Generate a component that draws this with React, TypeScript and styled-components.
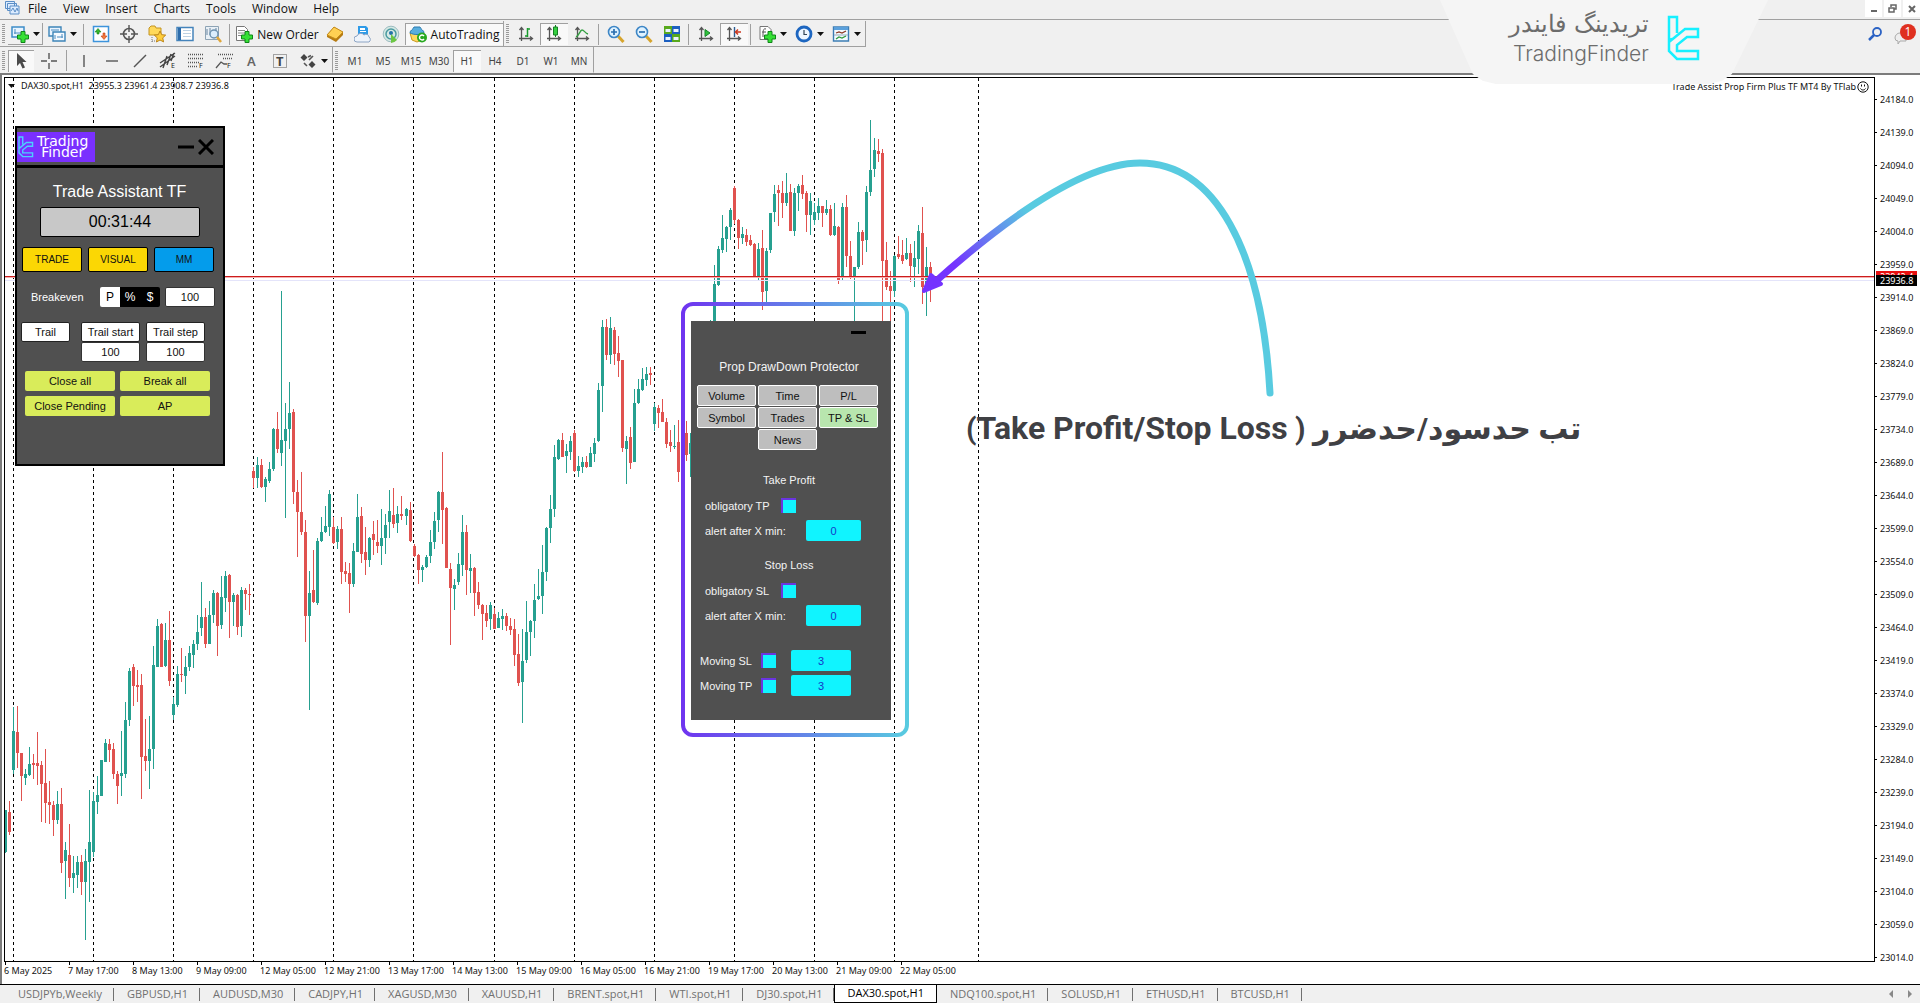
import React from 'react';
import styled, { createGlobalStyle, css } from 'styled-components';

const GlobalStyle = createGlobalStyle`
  *, *::before, *::after { box-sizing: border-box; }
  body { margin: 0; background: #fff; }
  button, input { font: inherit; color: inherit; margin: 0; padding: 0; border: 0; background: none; }
  svg { display: block; flex: none; }
`;

const UI_FONT = '"Open Sans", "Noto Sans", sans-serif';
const CHART_FONT = '"Noto Sans", "Open Sans", sans-serif';
const PANEL_FONT = '"Liberation Sans", Arial, sans-serif';

/* ---------- window chrome ---------- */

const Window = styled.div`
  position: relative;
  display: flex;
  flex-direction: column;
  min-height: 100vh;
  overflow: hidden;
  background: #f0f0f0;
  color: #111;
  font-family: ${UI_FONT};
  font-size: 12px;
`;

const MenuBar = styled.nav`
  display: flex;
  align-items: flex-start;
  height: 20px;
  padding-left: 5px;
  border-bottom: 1px solid #a0a0a0;
`;

const MenuItem = styled.button`
  padding: 0 8px;
  line-height: 17px;
`;

const WindowControls = styled.div`
  display: flex;
  gap: 2px;
  margin-left: auto;
`;

const ControlButton = styled.button`
  display: grid;
  place-items: center;
  width: 17px;
  height: 17px;
  background: #fff;
`;

const ToolRow = styled.div<{ $height: number }>`
  display: flex;
  align-items: center;
  height: ${(p) => p.$height}px;
`;

const ToolGroup = styled.div<{ $line?: boolean }>`
  display: flex;
  align-items: center;
  height: 26px;
  padding-top: 2px;
  border-right: 1px solid #a0a0a0;
  border-bottom: 1px solid ${(p) => (p.$line ? '#a0a0a0' : 'transparent')};
`;

const Grip = styled.span`
  width: 3px;
  height: 20px;
  margin: 0 3px 0 2px;
  background: repeating-linear-gradient(#9a9a9a 0 1px, transparent 1px 2px);
`;

const Separator = styled.span`
  width: 1px;
  height: 21px;
  margin: 0 3px 0 2px;
  background: #a0a0a0;
`;

const Tool = styled.button<{ $width?: number; $pressed?: boolean; $raised?: boolean }>`
  display: flex;
  align-items: center;
  justify-content: center;
  gap: 4px;
  width: ${(p) => p.$width ?? 28}px;
  height: 22px;
  white-space: nowrap;
  ${(p) => p.$pressed && css`
    background: #f9f9f9;
    box-shadow: inset 1px 1px 0 #a0a0a0;
  `}
  ${(p) => p.$raised && css`
    box-shadow: inset -1px -1px 0 #a0a0a0;
  `}
`;

const Period = styled(Tool)`
  color: #444;
  font-family: ${CHART_FONT};
  font-size: 10px;
`;

const Alerts = styled.div`
  display: flex;
  align-items: center;
  gap: 11px;
  margin-left: auto;
  padding-right: 1px;
`;

/* ---------- chart ---------- */

const ChartWindow = styled.main`
  display: grid;
  flex: 1;
  grid-template-columns: minmax(0, 1fr) 45px;
  grid-template-rows: minmax(0, 1fr) 22px;
  padding: 2px 0 0 2px;
  border-top: 2px solid #7c7c7c;
  border-left: 2px solid #7c7c7c;
  background: #fff;
  font-family: ${CHART_FONT};
  font-size: 9px;
  line-height: 12px;
`;

const Plot = styled.section`
  position: relative;
  overflow: hidden;
  border: 1px solid #000;
`;

const PlotDrawing = styled.svg`
  position: absolute;
  inset: 0;
  width: 100%;
  height: 100%;
`;

const ChartCaption = styled.div`
  position: absolute;
  top: 2px;
  left: 3px;
  display: flex;
  align-items: center;
  gap: 6px;
  white-space: pre;
`;

const ExpertName = styled.div`
  position: absolute;
  top: 3px;
  right: 5px;
  display: flex;
  align-items: center;
  gap: 1px;
`;

const Annotation = styled.p`
  position: absolute;
  top: 325px;
  left: 961px;
  margin: 0;
  color: #3f4044;
  font: 700 30px/50px Roboto, "DejaVu Sans", sans-serif;
  white-space: nowrap;
`;

const Latin = styled.bdi`
  font-size: 32px;
`;

const PriceAxis = styled.aside`
  position: relative;
  grid-row: 1 / 3;
  grid-column: 2;
  padding-top: 6px;
`;

const PriceLabel = styled.div`
  display: flex;
  align-items: center;
  gap: 3px;
  height: 33px;
  &::before { content: ''; width: 2px; height: 1px; background: #000; }
`;

const PriceTag = styled.div<{ $color: string; $top: number }>`
  position: absolute;
  top: ${(p) => p.$top}px;
  left: 1px;
  width: 41px;
  height: 11px;
  padding-left: 4px;
  background: ${(p) => p.$color};
  color: #fff;
  line-height: 11px;
`;

const DateAxis = styled.footer`
  display: flex;
  grid-column: 1;
`;

const DateLabel = styled.div`
  width: 64px;
  white-space: nowrap;
  &::before { content: ''; display: block; width: 1px; height: 3px; margin-left: 1px; background: #000; }
`;

const TabBar = styled.div`
  display: flex;
  align-items: center;
  height: 19px;
  padding-left: 5px;
  border-top: 1px solid #000;
  color: #707070;
  font-size: 11px;
`;

const Tab = styled.button<{ $active?: boolean }>`
  height: 18px;
  padding: 0 12px 0 13px;
  line-height: 16px;
  white-space: nowrap;
  background: linear-gradient(#707070, #707070) right center / 1px 13px no-repeat;
  ${(p) => p.$active && css`
    margin-top: -1px;
    padding: 0 12px;
    background: #fff;
    border: solid #000;
    border-width: 0 1px 1px;
    color: #000;
  `}
`;

const TabScroll = styled.div`
  display: flex;
  gap: 15px;
  margin-left: auto;
  padding-right: 8px;
`;

/* ---------- assistant panel ---------- */

const Assistant = styled.section`
  position: absolute;
  top: 48px;
  left: 10px;
  width: 210px;
  height: 340px;
  border: 2px solid #000;
  background: #505050;
  color: #fff;
  font-family: ${PANEL_FONT};
  font-size: 11px;
`;

const AssistantHeader = styled.header`
  display: flex;
  align-items: center;
  gap: 4px;
  height: 40px;
  padding-right: 9px;
  border-bottom: 3px solid #000;
`;

const Badge = styled.div`
  display: flex;
  align-items: center;
  gap: 2px;
  width: 78px;
  height: 30px;
  margin-right: auto;
  background: #7a30ff;
  font: 400 14px/11px "DejaVu Sans", sans-serif;
`;

const BadgeName = styled.span`
  white-space: pre-line;
  text-align: center;
`;

const AssistantBody = styled.div`
  display: flex;
  flex-direction: column;
  padding: 13px 5px 0 4px;
`;

const AssistantTitle = styled.h2`
  margin: 0;
  font-size: 16px;
  font-weight: 400;
  line-height: 22px;
  text-align: center;
`;

const Clock = styled.output`
  width: 160px;
  height: 30px;
  margin: 4px 0 10px 19px;
  border: 1px solid #000;
  border-radius: 2px;
  background: #c8c8c8;
  color: #000;
  font-size: 16px;
  line-height: 28px;
  text-align: center;
`;

const Row = styled.div<{ $gap: number; $bottom: number; $left?: number }>`
  display: flex;
  align-items: flex-start;
  gap: ${(p) => p.$gap}px;
  margin-bottom: ${(p) => p.$bottom}px;
  padding-left: ${(p) => p.$left ?? 0}px;
`;

const ModeButton = styled.button<{ $color: string }>`
  width: 60px;
  height: 25px;
  border: 1px solid #000;
  border-radius: 2px;
  background: ${(p) => p.$color};
  color: #111;
  font-size: 10px;
`;

const BreakevenLabel = styled.label`
  width: 69px;
  line-height: 20px;
`;

const UnitGroup = styled.div`
  display: flex;
  overflow: hidden;
  border-radius: 2px;
`;

const Unit = styled.button<{ $on?: boolean }>`
  width: 20px;
  height: 20px;
  background: ${(p) => (p.$on ? '#fff' : '#000')};
  color: ${(p) => (p.$on ? '#000' : '#fff')};
  font-size: 12px;
`;

const WhiteInput = styled.input<{ $width: number }>`
  width: ${(p) => p.$width}px;
  height: 20px;
  border: 1px solid #333;
  border-radius: 2px;
  background: #fff;
  color: #111;
  text-align: center;
`;

const WhiteButton = styled.button<{ $width: number }>`
  width: ${(p) => p.$width}px;
  height: 20px;
  border: 1px solid #222;
  border-radius: 2px;
  background: #fff;
  color: #111;
`;

const Stack = styled.div`
  display: flex;
  flex-direction: column;
`;

const ActionGrid = styled.div`
  display: grid;
  grid-template-columns: 90px 90px;
  gap: 5px;
  padding-left: 4px;
`;

const ActionButton = styled.button`
  height: 20px;
  border-radius: 2px;
  background: #d9ec5a;
  color: #111;
`;

/* ---------- drawdown panel ---------- */

const Protector = styled.section`
  position: absolute;
  top: 243px;
  left: 686px;
  width: 200px;
  height: 399px;
  padding: 0 12px 0 6px;
  background: #505050;
  color: #f4f4f4;
  font-family: ${PANEL_FONT};
  font-size: 11px;
`;

const MinimizeRow = styled.div`
  display: flex;
  justify-content: flex-end;
  height: 36px;
  padding: 10px 13px 0 0;
`;

const Minimize = styled.button`
  width: 15px;
  height: 3px;
  background: #000;
`;

const ProtectorTitle = styled.h2`
  margin: 0 0 8px;
  padding-left: 2px;
  font-size: 12px;
  font-weight: 400;
  line-height: 20px;
  text-align: center;
`;

const TabGrid = styled.div`
  display: grid;
  grid-template-columns: repeat(3, 59px);
  gap: 1px 2px;
`;

const PanelTab = styled.button<{ $active?: boolean; $middle?: boolean }>`
  height: 21px;
  border: 1px solid #fff;
  border-radius: 2px;
  background: ${(p) => (p.$active ? '#b8e6ae' : '#bebebe')};
  color: #111;
  ${(p) => p.$middle && css`grid-column: 2;`}
`;

const SectionTitle = styled.h3<{ $top: number }>`
  margin: ${(p) => p.$top}px 0 3px;
  padding-left: 2px;
  font-size: 11px;
  font-weight: 400;
  line-height: 20px;
  text-align: center;
`;

const Field = styled.div<{ $columns: string; $left: number }>`
  display: grid;
  grid-template-columns: ${(p) => p.$columns};
  align-items: center;
  height: 25px;
  padding-left: ${(p) => p.$left}px;
  white-space: nowrap;
`;

const Check = styled.input`
  appearance: none;
  width: 15px;
  height: 15px;
  border: solid #6a35e0;
  border-width: 2px 0 0 2px;
  background: #10f4ff;
`;

const CyanInput = styled.input<{ $width: number }>`
  width: ${(p) => p.$width}px;
  height: 21px;
  border-radius: 2px;
  background: #10f4ff;
  color: #1538c8;
  text-align: center;
`;

const MovingFields = styled.div`
  margin-top: 20px;
`;

/* ---------- watermark ---------- */

const Watermark = styled.div`
  position: absolute;
  top: 0;
  right: 152px;
  display: flex;
  justify-content: center;
  gap: 18px;
  width: 328px;
  height: 84px;
  padding: 9px 0 0 2px;
  background: #f5f5f5;
  clip-path: polygon(0 0, 100% 0, 89% 88%, 86% 96%, 82% 100%, 17% 100%, 13% 96%, 10% 88%);
  color: #6c6c6c;
`;

const BrandName = styled.div`
  display: flex;
  flex-direction: column;
  align-items: flex-end;
  font: 300 21px/30px Inter, "DejaVu Sans", sans-serif;
`;

const BrandPersian = styled.span`
  font: 200 24px/30px "DejaVu Sans", sans-serif;
`;

/* ---------- drawings ---------- */

const Caret = () => (
  <svg width="7" height="4"><path d="M0 0h7L3.500 4z" fill="#111" /></svg>
);

const Icon = ({ children, size = 18 }: { children: React.ReactNode; size?: number }) => (
  <svg width={size} height={size} viewBox="0 0 18 18" fill="none">{children}</svg>
);

const Plus = () => (
  <path d="M10 6.500h4v3.500h3.500v4H14v3.500h-4V14H6.500v-4H10z" fill="#35e035" stroke="#11851a" />
);

const Axes = () => (
  <path d="M4.500 3v13M2 13.500h13M2.500 5l2-2.500 2 2.500M13 11.500l2.500 2-2.500 2" stroke="#555" strokeWidth="1.300" />
);

const AppIcon = () => (
  <svg width="15" height="15" viewBox="0 0 15 15" fill="#dcecff" stroke="#5b8ec6">
    <path d="M.5 1.500h9v7h-9zM2.500 3.500h9v7h-9z" /><path d="M5 6h9v8H5z" /><path d="M6 11l2-3 2 4 2-4 1 3" fill="none" />
  </svg>
);

const NewChartIcon = () => (
  <Icon><path d="M1 2h12v10H1z" fill="#e8f4ff" stroke="#3c8cc8" strokeWidth="1.500" /><path d="M3 8h7M4 4v5" stroke="#4a8cc0" /><Plus /></Icon>
);
const ProfilesIcon = () => (
  <Icon><path d="M1 2h12v9H1z" fill="#eaf4ff" stroke="#3c84b8" strokeWidth="1.400" /><path d="M5 7h12v9H5z" fill="#f6faff" stroke="#3c84b8" strokeWidth="1.400" /><path d="M3 5h8M7 10v4M9 12h6M14 9v4" stroke="#4a8cc0" /></Icon>
);
const MarketIcon = () => (
  <Icon><path d="M1.500 1.500h15v15h-15z" fill="#fff" stroke="#3d94dc" strokeWidth="1.500" /><path d="M6 3.500L9 7H7v2H5V7H3z" fill="#35b52c" stroke="#19801c" strokeWidth=".6" /><path d="M12 14.500L9 11h2V8h2v3h2z" fill="#f27a3d" stroke="#c33c14" strokeWidth=".6" /></Icon>
);
const CrosshairIcon = () => (
  <Icon><circle cx="9" cy="9" r="5.500" stroke="#555" strokeWidth="1.600" /><path d="M9 0v7M9 11v7M0 9h7M11 9h7" stroke="#555" strokeWidth="1.400" /></Icon>
);
const FavoritesIcon = () => (
  <Icon><path d="M1 3l2-2h4l1 2h5v7H1z" fill="#ffd95a" stroke="#c39422" /><path d="M4 12v5M4 16h4" stroke="#777" strokeDasharray="1 1" /><path d="M12 6l1.700 3.700 4 .4-3 2.800.9 4L12 15l-3.600 2 .9-4.100-3-2.800 4-.4z" fill="#ffce3a" stroke="#bd861a" /></Icon>
);
const NavigatorIcon = () => (
  <Icon><path d="M1 2.500h16v13H1z" fill="#fff" stroke="#4584bb" strokeWidth="1.500" /><path d="M2 3h3v12H2z" fill="#2c6cab" /><path d="M7 5.500h8M7 8.500h8M7 11.500h8" stroke="#bdd2e4" /></Icon>
);
const TesterIcon = () => (
  <Icon><path d="M1.500 1.500h13v13h-13z" fill="#e9f0f6" stroke="#8da3b4" /><path d="M3 4v6M6 3v7M12 3v4" stroke="#6684a0" /><circle cx="10" cy="9" r="4" fill="#d7edff" fillOpacity=".8" stroke="#6d92b0" strokeWidth="1.400" /><path d="M13 12l4 5" stroke="#dfa63a" strokeWidth="2.500" /></Icon>
);
const OrderIcon = () => (
  <Icon><path d="M1.500 1.500h8l3 3v11h-11z" fill="#fff" stroke="#777" /><path d="M3 5.500h7M3 8h7M3 10.500h5" stroke="#888" /><Plus /></Icon>
);
const MetaEditorIcon = () => (
  <Icon><path d="M1 10l7-8 9 5v3l-7 7-9-5z" fill="#b77c12" /><path d="M1 10l7-8 9 5-7 7z" fill="#ffd053" stroke="#c48b1a" /></Icon>
);
const CloudIcon = () => (
  <Icon><path d="M4 1h8l2 2v7H4z" fill="#2e9be8" /><path d="M6 3h5v2H6zM6 6h6v1H6z" fill="#fff" /><path d="M3 17a3 3 0 010-6 4 4 0 017-1 3 3 0 015 2 3 3 0 010 5z" fill="#eef3fa" stroke="#8ca4c4" /></Icon>
);
const SignalIcon = () => (
  <Icon><circle cx="9" cy="9" r="7.800" fill="#d6e9e4" stroke="#9bbcc0" /><circle cx="9" cy="9" r="5" stroke="#4a9aa0" strokeWidth="1.500" /><circle cx="9" cy="8" r="2" fill="#2272a8" /><path d="M9 9v9a9 9 0 006-3z" fill="#6cc644" /></Icon>
);
const RobotIcon = () => (
  <Icon><path d="M1 8h14l-2 7-5 2-5-2z" fill="#ffd95e" stroke="#c99820" /><path d="M1 8c0-3 3-3 4-6h6c1 3 4 3 4 6-4 2-10 2-14 0z" fill="#58aede" stroke="#2b7bb0" /><circle cx="13" cy="12.500" r="5" fill="#27a81f" /><path d="M15 11a2.500 2.500 0 100 3" stroke="#fff" strokeWidth="1.400" /></Icon>
);
const BarsIcon = () => <Icon><Axes /><path d="M10.500 3v9M8 11h2.500M10.500 4H13" stroke="#189a2c" strokeWidth="1.500" /></Icon>;
const CandlesIcon = () => <Icon><Axes /><path d="M10.500 0v12" stroke="#167f25" /><path d="M8.500 2h4v8h-4z" fill="#35d040" stroke="#167f25" /></Icon>;
const LineIcon = () => <Icon><Axes /><path d="M3 12c3-1 4-7 6-7s3 3 6 4" stroke="#35a043" strokeWidth="1.400" /></Icon>;
const ZoomIcon = ({ plus }: { plus?: boolean }) => (
  <Icon><path d="M11 11l5.500 6" stroke="#d6a42c" strokeWidth="3" /><circle cx="7" cy="7" r="5.500" fill="#dff2ff" stroke="#3d86c6" strokeWidth="1.600" /><path d={plus ? 'M4 7h6M7 4v6' : 'M4 7h6'} stroke="#2b6fb0" strokeWidth="1.700" /></Icon>
);
const TilesIcon = () => (
  <Icon><path d="M1 1h8v8H1zM9 9h8v8H9z" fill="#58a91c" /><path d="M9 1h8v8H9zM1 9h8v8H1z" fill="#1c5fc0" /><path d="M2.500 4h5v3h-5zM10.500 4h5v3h-5zM2.500 12h5v3h-5zM10.500 12h5v3h-5z" fill="#eaf3ff" /></Icon>
);
const ScrollIcon = () => <Icon><Axes /><path d="M8 4.500l5 3.500-5 3.500z" fill="#2fc23b" stroke="#18852a" /></Icon>;
const ShiftIcon = () => <Icon><Axes /><path d="M9.500 2v10" stroke="#2c5d92" strokeWidth="1.400" /><path d="M16 7h-5M13 4.500L10.500 7l2.500 2.500" stroke="#cc3a20" strokeWidth="1.500" /></Icon>;
const IndicatorIcon = () => (
  <Icon><path d="M2 1.500h8l3 3v10H2z" fill="#fff" stroke="#777" /><path d="M8 4c-3-1-3 2-3 8M4 7h4" stroke="#555" /><Plus /></Icon>
);
const ClockIcon = () => (
  <Icon><circle cx="9" cy="9" r="7" fill="#eef6ff" stroke="#1d66c0" strokeWidth="2.800" /><path d="M9 5v4.500h3" stroke="#345" strokeWidth="1.200" /></Icon>
);
const TemplateIcon = () => (
  <Icon><path d="M1.500 2h15v14h-15z" fill="#f4faff" stroke="#3d7db4" strokeWidth="1.400" /><path d="M2 2h14v3H2z" fill="#5aa0dc" /><path d="M4 8l3-1 3 1 4-2" stroke="#8c3a24" strokeWidth="1.300" /><path d="M2 10h14" stroke="#9ab" /><path d="M4 14l3-2 3 1 4-2" stroke="#2e9a3a" strokeWidth="1.300" /></Icon>
);
const Mark = ({ children }: { children: string }) => (
  <text x="12" y="16" fontSize="7" fontFamily="Noto Sans" fill="#222">{children}</text>
);
const StrokeIcon = ({ d }: { d: string }) => (
  <Icon><path d={d} stroke="#555" strokeWidth="1.400" /></Icon>
);
const ChannelIcon = () => (
  <Icon><path d="M1 15L16 4M1 11L16 1M4 16L8 4M8 13L12 2M12 9L15 1" stroke="#444" strokeWidth="1.400" /><Mark>E</Mark></Icon>
);
const CursorIcon = () => <Icon><path d="M5 1v13l3-3 2.500 5.500 2.500-1L10.500 10h4z" fill="#4b4b4b" /></Icon>;
const TextIcon = () => <Icon><text x="4" y="14" fontSize="13" fontWeight="600" fontFamily="Noto Sans" fill="#666">A</text></Icon>;
const LabelIcon = () => (
  <Icon><path d="M2.500 2.500h13v13h-13z" stroke="#555" strokeDasharray="1 1" /><text x="5" y="14" fontSize="13" fontWeight="700" fontFamily="Noto Sans" fill="#444">T</text></Icon>
);
const FiboIcon = ({ fan }: { fan?: boolean }) => (
  <Icon>
    <path d={fan ? 'M3 2.500h15M8 6.500h9' : 'M1 2.500h15M1 6.500h15M1 10.500h11M1 14.500h9'} stroke="#555" strokeDasharray="1 1" strokeWidth="1.400" />
    {fan && <path d="M1 16l5-6 3 2h3" stroke="#555" strokeWidth="1.300" />}
    <Mark>F</Mark>
  </Icon>
);
const ShapesIcon = () => (
  <Icon><path d="M5 2l3.500 3.500L5 9 1.500 5.500zM13 9l3.500 3.500L13 16l-3.500-3.500z" fill="#444" /><path d="M9 5l3-1.500M5 11l3 3M10 8l4-4" stroke="#555" strokeWidth="1.600" /></Icon>
);

const BRAND_MARK = 'M10 18V2H2V25L5 24M2 27L18 14H31V22H20L10 30V36H31V44H10L2 36Z';

/* ---------- market data: [up, high, bodyTop, bodyBottom, low] in page pixels ---------- */

type Candle = [0 | 1, number, number, number, number];

const CANDLES: Candle[] = [
  [1,810,810,852,853],[0,801,812,832,835],[1,707,731,770,774],[0,706,732,753,768],[0,753,753,776,801],[1,769,774,778,785],
  [1,747,764,775,776],[0,754,763,765,779],[0,732,763,766,785],[0,761,765,784,822],[0,749,783,803,823],[0,781,802,805,824],
  [0,801,805,820,836],[1,791,804,820,824],[0,788,804,863,873],[1,842,850,861,899],[0,824,855,878,887],[1,856,873,878,893],
  [1,856,862,875,888],[0,855,862,882,895],[1,849,861,882,940],[1,790,842,862,902],[1,792,801,852,857],[1,776,795,802,814],
  [1,760,760,796,796],[1,739,743,762,762],[0,739,744,750,762],[0,743,749,774,779],[0,771,774,786,804],[1,731,773,776,796],
  [1,702,720,774,778],[1,668,671,720,726],[0,664,667,686,706],[0,670,685,687,702],[0,674,685,757,799],[0,719,756,761,771],
  [1,716,749,761,789],[1,646,665,749,769],[1,619,626,667,667],[0,623,624,667,667],[1,623,640,666,667],[0,611,640,681,686],
  [1,697,704,715,720],[1,666,674,705,707],[0,648,674,675,682],[1,656,667,676,694],[1,646,653,667,671],[1,640,644,655,668],
  [1,615,632,644,650],[1,582,617,628,636],[0,608,617,644,648],[1,601,615,644,644],[1,590,593,615,623],[0,592,593,626,656],
  [1,576,597,625,629],[1,571,576,598,612],[0,574,575,602,638],[1,593,595,602,626],[0,594,595,627,635],[1,587,590,626,637],
  [0,588,590,594,610],[0,584,594,595,615],
  [0,467,471,478,488],[1,457,465,478,488],[0,459,465,487,488],[1,477,479,487,502],[1,462,469,481,483],[1,428,429,469,471],
  [0,412,429,449,453],[1,291,440,453,466],[1,403,429,441,518],[1,382,413,429,449],[0,409,412,492,504],[0,480,492,512,557],
  [0,472,512,532,535],[0,520,532,616,642],[1,571,593,616,710],[0,550,590,602,603],[1,538,541,603,605],[1,517,532,541,542],
  [1,506,526,532,533],[1,490,494,527,536],[0,517,527,543,544],[1,526,529,542,549],[0,517,529,572,584],[0,562,571,574,582],
  [0,563,573,584,613],[1,543,551,584,587],[1,494,517,552,552],[0,507,516,554,563],[0,527,552,560,575],[1,537,538,560,567],
  [0,521,534,540,555],[0,520,542,546,553],[1,509,538,546,565],[1,514,525,538,554],[1,490,511,522,538],[0,488,515,524,528],
  [1,506,514,523,533],[0,496,514,516,520],[1,508,509,516,525],[0,502,510,541,542],[0,544,546,556,557],[0,554,555,570,584],
  [1,565,567,570,582],[1,555,557,567,568],[1,530,542,556,563],[1,512,521,542,549],[1,491,492,520,532],[0,452,492,510,544],
  [0,507,508,568,568],[0,563,569,588,645],[1,579,585,589,610],[1,553,564,582,585],[1,515,532,565,576],[0,525,532,570,595],
  [1,554,568,571,593],[0,567,568,593,616],[0,582,592,605,609],[0,604,605,614,640],[0,605,613,621,627],[1,602,605,619,630],
  [0,608,614,629,629],[1,612,618,628,628],[1,609,616,619,630],[0,613,616,626,631],[0,618,626,630,635],[0,619,629,655,666],
  [0,634,654,683,686],[1,629,661,682,723],[1,601,632,660,663],[1,620,621,632,656],[1,584,600,621,638],[1,569,596,599,600],
  [1,545,572,596,614],[1,527,528,572,581],[1,495,509,528,543],[1,445,457,509,517],[1,439,440,459,460],[0,433,440,457,457],
  [1,444,451,456,473],[1,436,441,452,460],[0,430,433,471,472],[1,456,466,471,477],[1,457,462,467,473],[0,456,462,467,468],
  [1,447,453,467,467],[1,438,443,454,462],[1,383,390,441,442],[1,320,327,386,412],[0,319,327,355,360],[1,317,328,355,364],
  [0,327,330,354,365],[0,336,353,361,377],[0,360,360,448,452],[1,436,441,449,484],[0,427,437,463,469],[1,389,403,462,462],
  [1,379,389,403,404],[1,368,379,390,391],[1,367,374,380,386],[0,367,373,375,385],[1,403,407,424,431],[0,405,408,413,428],
  [0,399,412,422,422],[0,418,422,444,448],[0,430,442,446,452],[1,425,446,447,449],[0,420,442,472,482],[1,435,448,470,478],
  [0,421,433,455,461],[1,433,443,454,477],[1,400,420,440,450],[1,380,400,420,430],[1,360,380,400,410],[1,340,360,380,390],
  [1,320,340,360,370],[1,265,284,330,340],[1,246,249,285,286],[1,215,238,250,253],[1,226,227,239,252],[1,208,210,227,240],
  [0,186,188,220,224],[0,219,220,238,249],[1,227,234,238,244],[0,229,235,242,246],[0,235,240,245,246],[0,243,244,276,277],
  [1,243,249,277,280],[0,230,248,292,310],[1,248,251,291,302],[1,213,213,250,253],[1,185,194,212,222],[0,185,190,193,226],
  [0,181,193,203,218],[1,173,193,203,206],[0,184,192,231,231],[1,188,193,231,236],[1,184,186,193,211],[0,175,185,194,199],
  [0,191,193,215,232],[1,193,201,215,235],[1,203,212,220,225],[1,198,206,213,220],[0,206,206,213,227],[1,200,209,213,215],
  [0,205,209,235,236],[1,203,226,235,236],[0,226,227,281,284],[1,203,207,277,280],[0,195,207,256,267],[0,241,256,278,279],
  [1,267,267,277,321],[1,222,232,267,269],[0,230,232,241,265],[1,186,192,240,252],[1,120,170,192,196],[1,138,150,169,177],
  [0,139,151,154,162],[0,149,153,261,321],[0,242,260,287,290],[0,271,286,291,321],[1,255,256,291,297],[0,236,254,257,259],
  [0,240,255,261,264],[1,238,253,259,260],[0,244,253,266,282],[1,241,258,267,287],[1,225,231,259,274],[0,207,233,287,304],
  [1,247,267,287,316],[0,262,267,280,302],
];

const DAY_LINES = [13, 93, 173, 253, 333, 413, 494, 574, 654, 734, 814, 894, 978];
const PRICES = Array.from({ length: 27 }, (_, i) => (24184 - i * 45).toFixed(1));
const DATES = [
  '6 May 2025', '7 May 17:00', '8 May 13:00', '9 May 09:00', '12 May 05:00', '12 May 21:00', '13 May 17:00', '14 May 13:00',
  '15 May 09:00', '16 May 05:00', '16 May 21:00', '19 May 17:00', '20 May 13:00', '21 May 09:00', '22 May 05:00',
];
const SYMBOLS = [
  'USDJPYb,Weekly', 'GBPUSD,H1', 'AUDUSD,M30', 'CADJPY,H1', 'XAGUSD,M30', 'XAUUSD,H1', 'BRENT.spot,H1', 'WTI.spot,H1',
  'DJ30.spot,H1', 'DAX30.spot,H1', 'NDQ100.spot,H1', 'SOLUSD,H1', 'ETHUSD,H1', 'BTCUSD,H1',
];
const MENUS = ['File', 'View', 'Insert', 'Charts', 'Tools', 'Window', 'Help'];
const PERIODS = ['M1', 'M5', 'M15', 'M30', 'H1', 'H4', 'D1', 'W1', 'MN'];
const PANEL_TABS = ['Volume', 'Time', 'P/L', 'Symbol', 'Trades', 'TP & SL', 'News'];

const ChartDrawing = () => (
  <PlotDrawing role="img" aria-label="DAX30 hourly candles">
    <defs>
      <linearGradient id="frame"><stop offset="0" stopColor="#6f35f0" /><stop offset="1" stopColor="#58cbe0" /></linearGradient>
      <linearGradient id="arrow" gradientUnits="userSpaceOnUse" x1="955" y1="265" x2="1025" y2="205">
        <stop offset="0" stopColor="#7433ff" /><stop offset="1" stopColor="#58cbe0" />
      </linearGradient>
    </defs>
    <g transform="translate(-5 -78)">
      <g stroke="#000" strokeDasharray="3 3" shapeRendering="crispEdges">
        {DAY_LINES.map((x) => <line key={x} x1={x + 0.5} x2={x + 0.5} y1="78" y2="961" />)}
      </g>
      <g shapeRendering="crispEdges">
        {CANDLES.map(([up, high, top, bottom, low], i) => {
          const x = Math.round(5 + i * 4.005);
          return (
            <g key={i} fill={up ? '#26a090' : '#e0524f'}>
              <rect x={x} y={high} width="1" height={Math.max(1, low - high)} />
              <rect x={x - 1} y={top} width="3" height={Math.max(1, bottom - top)} />
            </g>
          );
        })}
      </g>
      <rect x="5" y="276" width="100%" height="1" fill="#cc1c1c" />
      <rect x="5" y="277" width="100%" height="1" fill="#f5b0b0" />
      <rect x="5" y="280" width="100%" height="1" fill="#e4e4fa" />
      <rect x="683" y="304" width="224" height="431" rx="10" fill="none" stroke="url(#frame)" strokeWidth="4" />
      <path d="M1270 393C1262 250 1215 163 1140 163C1085 163 1010 215 935 282" fill="none" stroke="url(#arrow)" strokeWidth="7" strokeLinecap="round" />
      <path d="M924 291l7-16 10 9z" fill="#7433ff" stroke="#7433ff" strokeWidth="4" strokeLinejoin="round" />
    </g>
  </PlotDrawing>
);

const AssistantPanel = () => (
  <Assistant>
    <AssistantHeader>
      <Badge>
        <svg width="18" height="22" viewBox="0 0 34 47" fill="none" stroke="#4cd0ff" strokeWidth="3"><path d={BRAND_MARK} /></svg>
        <BadgeName>{'Trading\nFinder'}</BadgeName>
      </Badge>
      <button aria-label="Collapse"><svg width="16" height="16"><path d="M0 8h16" stroke="#000" strokeWidth="3" /></svg></button>
      <button aria-label="Close"><svg width="16" height="16"><path d="M1 1l14 14M15 1L1 15" stroke="#000" strokeWidth="3" /></svg></button>
    </AssistantHeader>
    <AssistantBody>
      <AssistantTitle>Trade Assistant TF</AssistantTitle>
      <Clock>00:31:44</Clock>
      <Row $gap={6} $bottom={15} $left={1}>
        <ModeButton $color="#fbd704">TRADE</ModeButton>
        <ModeButton $color="#fbd704">VISUAL</ModeButton>
        <ModeButton $color="#049ceb">MM</ModeButton>
      </Row>
      <Row $gap={0} $bottom={15} $left={10}>
        <BreakevenLabel htmlFor="breakeven">Breakeven</BreakevenLabel>
        <Row $gap={5} $bottom={0}>
          <UnitGroup><Unit $on>P</Unit><Unit>%</Unit><Unit>$</Unit></UnitGroup>
          <WhiteInput id="breakeven" $width={50} defaultValue="100" />
        </Row>
      </Row>
      <Row $gap={6} $bottom={9}>
        <Row $gap={11} $bottom={0}>
          <WhiteButton $width={49}>Trail</WhiteButton>
          <Stack><WhiteButton $width={59}>Trail start</WhiteButton><WhiteInput aria-label="Trail start" $width={59} defaultValue="100" /></Stack>
        </Row>
        <Stack><WhiteButton $width={59}>Trail step</WhiteButton><WhiteInput aria-label="Trail step" $width={59} defaultValue="100" /></Stack>
      </Row>
      <ActionGrid>
        {['Close all', 'Break all', 'Close Pending', 'AP'].map((t) => <ActionButton key={t}>{t}</ActionButton>)}
      </ActionGrid>
    </AssistantBody>
  </Assistant>
);

const LevelSection = ({ title, code, top }: { title: string; code: string; top: number }) => (
  <>
    <SectionTitle $top={top}>{title}</SectionTitle>
    <Field $left={8} $columns="76px auto">
      <label htmlFor={`need-${code}`}>obligatory {code}</label>
      <Check type="checkbox" id={`need-${code}`} />
    </Field>
    <Field $left={8} $columns="101px auto">
      <label htmlFor={`alert-${code}`}>alert after X min:</label>
      <CyanInput id={`alert-${code}`} $width={55} defaultValue="0" />
    </Field>
  </>
);

const ProtectorPanel = () => (
  <Protector>
    <MinimizeRow><Minimize aria-label="Minimize" /></MinimizeRow>
    <ProtectorTitle>Prop DrawDown Protector</ProtectorTitle>
    <TabGrid>
      {PANEL_TABS.map((t) => <PanelTab key={t} $active={t === 'TP & SL'} $middle={t === 'News'}>{t}</PanelTab>)}
    </TabGrid>
    <LevelSection title="Take Profit" code="TP" top={20} />
    <LevelSection title="Stop Loss" code="SL" top={12} />
    <MovingFields>
      {['SL', 'TP'].map((code) => (
        <Field key={code} $left={3} $columns="61px 30px auto">
          <label htmlFor={`move-${code}`}>Moving {code}</label>
          <Check type="checkbox" id={`move-${code}`} />
          <CyanInput aria-label={`Moving ${code} value`} $width={60} defaultValue="3" />
        </Field>
      ))}
    </MovingFields>
  </Protector>
);

export default function App() {
  return (
    <Window>
      <GlobalStyle />
      <MenuBar>
        <AppIcon />
        {MENUS.map((m) => <MenuItem key={m}>{m}</MenuItem>)}
        <WindowControls>
          <ControlButton aria-label="Minimize"><svg width="8" height="8"><path d="M1 6h6" stroke="#666" strokeWidth="2" /></svg></ControlButton>
          <ControlButton aria-label="Restore"><svg width="9" height="9" fill="none" stroke="#666" strokeWidth="1.500"><path d="M3 3V1h5v4H6M1 4h5v4H1z" /></svg></ControlButton>
          <ControlButton aria-label="Close"><svg width="8" height="8"><path d="M1 1l6 6M7 1L1 7" stroke="#666" strokeWidth="2" /></svg></ControlButton>
        </WindowControls>
      </MenuBar>

      <ToolRow $height={27}>
        <ToolGroup $line>
          <Grip />
          <Tool $width={35} $raised aria-label="New chart"><NewChartIcon /><Caret /></Tool>
          <Tool $width={38} aria-label="Profiles"><ProfilesIcon /><Caret /></Tool>
          <Separator />
          <Tool aria-label="Market watch"><MarketIcon /></Tool>
          <Tool aria-label="Data window"><CrosshairIcon /></Tool>
          <Tool aria-label="Favorites"><FavoritesIcon /></Tool>
          <Tool aria-label="Navigator"><NavigatorIcon /></Tool>
          <Tool aria-label="Strategy tester"><TesterIcon /></Tool>
          <Separator />
          <Tool $width={88}><OrderIcon />New Order</Tool>
          <Tool aria-label="MetaEditor"><MetaEditorIcon /></Tool>
          <Tool aria-label="VPS"><CloudIcon /></Tool>
          <Tool aria-label="Signals"><SignalIcon /></Tool>
          <Tool $width={98} $pressed><RobotIcon />AutoTrading</Tool>
        </ToolGroup>
        <ToolGroup $line>
          <Grip />
          <Tool aria-label="Bar chart"><BarsIcon /></Tool>
          <Tool $pressed aria-label="Candlesticks"><CandlesIcon /></Tool>
          <Tool aria-label="Line chart"><LineIcon /></Tool>
          <Separator />
          <Tool aria-label="Zoom in"><ZoomIcon plus /></Tool>
          <Tool aria-label="Zoom out"><ZoomIcon /></Tool>
          <Tool aria-label="Tile windows"><TilesIcon /></Tool>
          <Separator />
          <Tool aria-label="Auto scroll"><ScrollIcon /></Tool>
          <Tool $pressed aria-label="Chart shift"><ShiftIcon /></Tool>
          <Separator />
          <Tool $width={37} aria-label="Indicators"><IndicatorIcon /><Caret /></Tool>
          <Tool $width={37} aria-label="Periods"><ClockIcon /><Caret /></Tool>
          <Tool $width={37} aria-label="Templates"><TemplateIcon /><Caret /></Tool>
        </ToolGroup>
        <Alerts>
          <button aria-label="Search">
            <svg width="14" height="14" fill="none" stroke="#2b62c4"><circle cx="9" cy="5" r="4" strokeWidth="1.800" /><path d="M6 8l-5 5" strokeWidth="2.500" /></svg>
          </button>
          <button aria-label="Notifications">
            <svg width="26" height="22">
              <path d="M2 15a5 5 0 015-5h6v8H7l-2 3v-3a3 3 0 01-3-3z" fill="#eee" stroke="#aaa" />
              <circle cx="15" cy="9" r="8" fill="#df3020" />
              <text x="15" y="13" textAnchor="middle" fontSize="12" fontFamily="Open Sans" fill="#fff">1</text>
            </svg>
          </button>
        </Alerts>
      </ToolRow>

      <ToolRow $height={26}>
        <ToolGroup>
          <Grip />
          <Tool $width={26} $pressed aria-label="Cursor"><CursorIcon /></Tool>
          <Tool $width={30} aria-label="Crosshair"><StrokeIcon d="M9 1v6M9 11v6M1 9h6M11 9h6" /></Tool>
          <Separator />
          <Tool aria-label="Vertical line"><StrokeIcon d="M9 3v12" /></Tool>
          <Tool aria-label="Horizontal line"><StrokeIcon d="M3 9h12" /></Tool>
          <Tool aria-label="Trend line"><StrokeIcon d="M3 15L15 3" /></Tool>
          <Tool aria-label="Channel"><ChannelIcon /></Tool>
          <Tool aria-label="Fibonacci retracement"><FiboIcon /></Tool>
          <Tool aria-label="Fibonacci expansion"><FiboIcon fan /></Tool>
          <Tool aria-label="Text"><TextIcon /></Tool>
          <Tool aria-label="Text label"><LabelIcon /></Tool>
          <Tool $width={38} aria-label="Arrows"><ShapesIcon /><Caret /></Tool>
        </ToolGroup>
        <ToolGroup>
          <Grip />
          {PERIODS.map((p) => <Period key={p} $pressed={p === 'H1'}>{p}</Period>)}
        </ToolGroup>
      </ToolRow>

      <ChartWindow>
        <Plot>
          <ChartDrawing />
          <ChartCaption>
            <Caret />
            <span>{'DAX30.spot,H1  23955.3 23961.4 23908.7 23936.8'}</span>
          </ChartCaption>
          <ExpertName>
            Trade Assist Prop Firm Plus TF MT4 By TFlab
            <svg width="12" height="12" fill="none" stroke="#111"><circle cx="6" cy="6" r="5.200" /><path d="M3.500 7.500c1 2 4 2 5 0" /><path d="M4.500 3.500v2M7.500 3.500v2" /></svg>
          </ExpertName>
          <AssistantPanel />
          <ProtectorPanel />
          <Annotation dir="rtl" lang="fa">تب حدسود/حدضرر ( <Latin>Take Profit/Stop Loss</Latin>)</Annotation>
        </Plot>
        <PriceAxis>
          {PRICES.map((p) => <PriceLabel key={p}>{p}</PriceLabel>)}
          <PriceTag $color="#e81010" $top={194}>23942.4</PriceTag>
          <PriceTag $color="#000" $top={198}>23936.8</PriceTag>
        </PriceAxis>
        <DateAxis>{DATES.map((d) => <DateLabel key={d}>{d}</DateLabel>)}</DateAxis>
      </ChartWindow>

      <TabBar>
        {SYMBOLS.map((s) => <Tab key={s} $active={s === 'DAX30.spot,H1'}>{s}</Tab>)}
        <TabScroll>
          <button aria-label="Scroll left"><svg width="4" height="8"><path d="M4 0v8L0 4z" fill="#888" /></svg></button>
          <button aria-label="Scroll right"><svg width="4" height="8"><path d="M0 0v8l4-4z" fill="#888" /></svg></button>
        </TabScroll>
      </TabBar>

      <Watermark>
        <BrandName>
          <BrandPersian dir="rtl" lang="fa">تریدینگ فایندر</BrandPersian>
          <span>TradingFinder</span>
        </BrandName>
        <svg width="34" height="60" viewBox="0 -6 34 60" fill="none" stroke="#16f0ff" strokeWidth="2.500"><path d={BRAND_MARK} /></svg>
      </Watermark>
    </Window>
  );
}
